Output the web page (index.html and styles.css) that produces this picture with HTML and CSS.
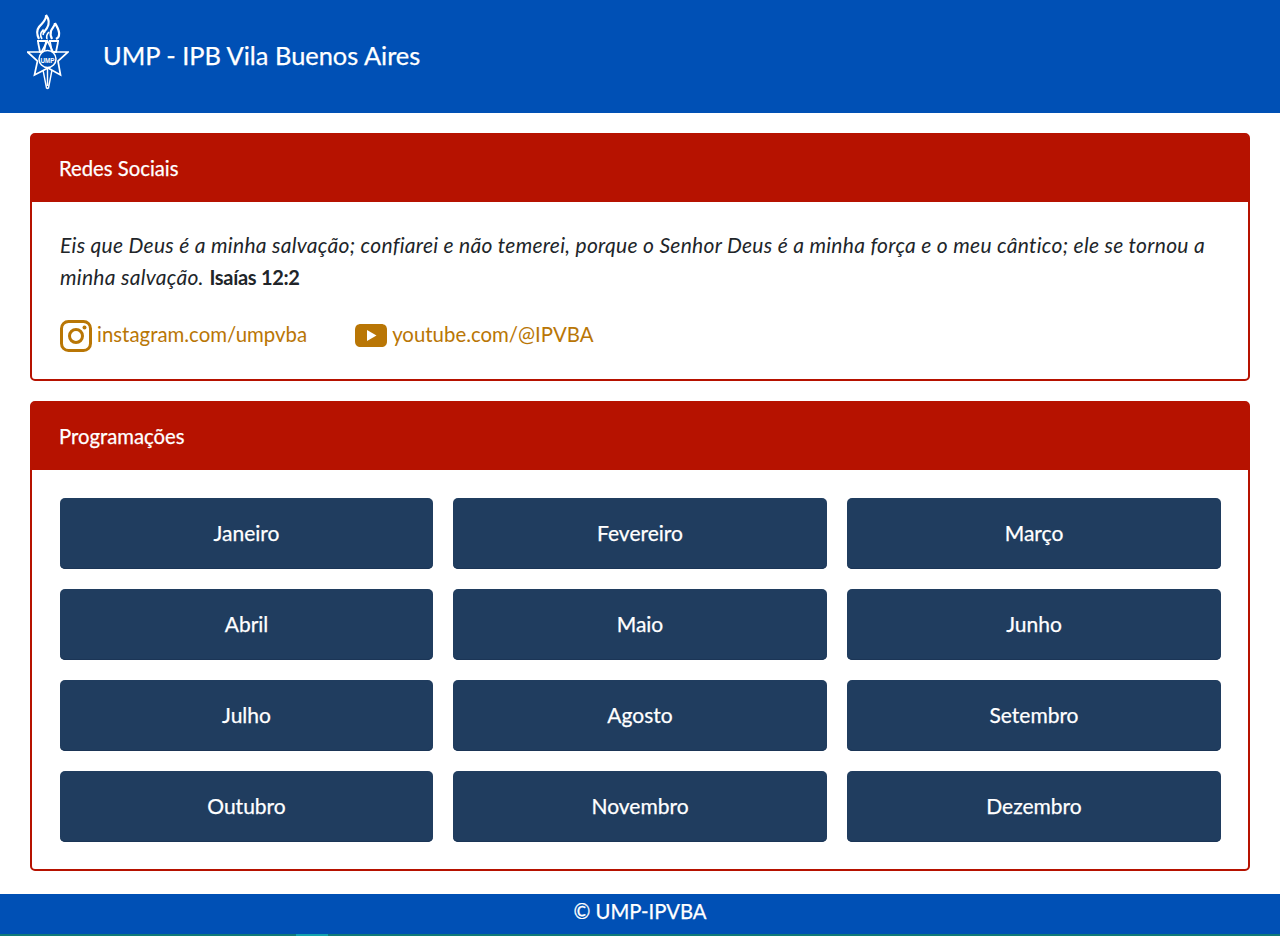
FILE: index.html
```html
<!DOCTYPE html>
<html lang="pt-BR">
<head>
    <meta charset="UTF-8">
    <meta name="viewport" content="width=device-width, initial-scale=1.0">
    <title>UMP - IPB Vila Buenos Aires</title>
    <link rel="stylesheet" href="styles.css">
</head>
<body>

    <!-- Top bar -->
    <header class="topbar">
        <svg class="logo" viewBox="0 0 42 78" fill="none" stroke="#fff" stroke-width="1.2">
            <!-- flames -->
            <path d="M19 2c1 5-4 8-7 12-3 4-2 8 0 12M19 2c3 4 4 8 1 13-1 2-3 3-3 5" stroke-width="2.2"/>
            <path d="M15 26c-2-3-2-6 1-9 1 2 1 3 0 5M20 26c-1-3 0-5 2-7" stroke-width="1.6"/>
            <path d="M28 10c0 3-3 5-4 8-1 3 0 6 1 8M28 10c2 4 5 8 4 12 0 2-1 3-3 4" stroke-width="2.2"/>
            <!-- torch cups -->
            <path d="M10 28h10M22 28h10M11 29l2 10h4l2-10M23 29l2 10h4l2-10" stroke-width="1.8"/>
            <!-- star -->
            <path d="M20.500 28l5.500 11h15l-10 9 2.500 14-12.500-7-13.500 7 3-14-10-9h14z" stroke-width="1.700"/>
            <circle cx="20.500" cy="46" r="8.500" fill="#0050b5" stroke-width="1.500"/>
            <text x="20.500" y="49.500" class="logo-text" textLength="14" lengthAdjust="spacingAndGlyphs">UMP</text>
            <!-- handle -->
            <path d="M16 57l3.500 18 1 .5 1-.5 3.500-18M20.500 56v17" stroke-width="1.400"/>
        </svg>
        <h1 class="site-title">UMP - IPB Vila Buenos Aires</h1>
    </header>

    <main class="content">

        <!-- Redes sociais -->
        <section class="card">
            <h2 class="card-header">Redes Sociais</h2>
            <div class="card-body">
                <p class="verse"><em>Eis que Deus é a minha salvação; confiarei e não temerei, porque o Senhor Deus é a minha força e o meu cântico; ele se tornou a minha salvação.</em> <strong>Isaías 12:2</strong></p>
                <div class="social-links">
                    <a class="social-link" href="#">
                        <svg class="social-icon" viewBox="0 0 32 32" fill="none" stroke="#b97605" stroke-width="3">
                            <rect x="1.500" y="1.500" width="29" height="29" rx="7"/>
                            <circle cx="16" cy="16" r="6.500"/>
                            <circle cx="24.500" cy="7.500" r="2" fill="#b97605" stroke="none"/>
                        </svg>
                        instagram.com/umpvba
                    </a>
                    <a class="social-link" href="#">
                        <svg class="social-icon" viewBox="0 0 32 32">
                            <path fill="#b97605" d="M6 4h20c4 0 6 2 6 6v11c0 4-2 6-6 6H6c-4 0-6-2-6-6V10c0-4 2-6 6-6z"/>
                            <path fill="#fff" d="M12 10l9.500 5.500-9.500 5.500z"/>
                        </svg>
                        youtube.com/@IPVBA
                    </a>
                </div>
            </div>
        </section>

        <!-- Programacoes -->
        <section class="card">
            <h2 class="card-header">Programações</h2>
            <div class="card-body month-grid">
                <a class="month-btn" href="#">Janeiro</a>
                <a class="month-btn" href="#">Fevereiro</a>
                <a class="month-btn" href="#">Março</a>
                <a class="month-btn" href="#">Abril</a>
                <a class="month-btn" href="#">Maio</a>
                <a class="month-btn" href="#">Junho</a>
                <a class="month-btn" href="#">Julho</a>
                <a class="month-btn" href="#">Agosto</a>
                <a class="month-btn" href="#">Setembro</a>
                <a class="month-btn" href="#">Outubro</a>
                <a class="month-btn" href="#">Novembro</a>
                <a class="month-btn" href="#">Dezembro</a>
            </div>
        </section>

    </main>

    <footer class="footer">© UMP-IPVBA</footer>
    <div class="footer-strip"><span class="strip-mark"></span></div>

</body>
</html>
```

FILE: styles.css
```css
* { box-sizing: border-box; }

body {
    margin: 0;
    font-family: Lato, "Open Sans", sans-serif;
    background: #fff;
    color: #212529;
}

.topbar {
    height: 113px;
    background: #0050b5;
    display: flex;
    align-items: center;
    padding-left: 27px;
    gap: 34px;
}
.logo { width: 42px; height: 78px; margin-bottom: 9px; }
.logo-text { font-size: 8px; font-weight: 700; fill: #fff; stroke: none; text-anchor: middle; font-family: "Liberation Sans", sans-serif; }
.site-title { margin: 0 0 4px; font-size: 25.4px; font-weight: 400; color: #fff; -webkit-text-stroke: .25px #fff; }

.content {
    padding: 20px 30px 23px;
    display: flex;
    flex-direction: column;
    gap: 20px;
}

.card {
    border: 2px solid #b61200;
    border-radius: 5px;
}
.card-header {
    margin: -1px -1px 0;
    height: 68px;
    padding: 0 28px;
    display: flex;
    align-items: center;
    background: #b61200;
    border-radius: 5px 5px 0 0;
    color: #fff;
    font-size: 20.3px;
    font-weight: 400;
    -webkit-text-stroke: .25px #fff;
}
.card-body { padding: 27px 27px 27px 28px; }

.verse { margin: 0; font-size: 21px; line-height: 32px; letter-spacing: .29px; }
.verse strong { font-size: 20px; line-height: 1; letter-spacing: -.3px; }
.social-links {
    display: flex;
    gap: 48px;
    margin-top: 27px;
}
.social-link {
    display: flex;
    align-items: flex-start;
    gap: 5px;
    color: #b97605;
    font-size: 20.4px;
    line-height: 28px;
    text-decoration: none;
}
.social-icon { width: 32px; height: 32px; }

.month-grid {
    display: grid;
    grid-template-columns: 373px 1fr 1fr;
    gap: 20px;
    padding-top: 28px;
}
.month-btn {
    height: 71px;
    padding-bottom: 2px;
    display: flex;
    align-items: center;
    justify-content: center;
    background: #203d5f;
    border-radius: 5px;
    box-shadow: inset 0 -1px 0 #1b3556;
    color: #fff;
    font-size: 21px;
    text-decoration: none;
    -webkit-text-stroke: .25px #fff;
}

.footer {
    height: 40px;
    background: #0050b5;
    color: #fff;
    font-size: 20.3px;
    text-align: center;
    line-height: 34px;
    -webkit-text-stroke: .25px #fff;
}
.footer-strip {
    height: 2px;
    background: #0f7a7a;
}
.strip-mark {
    display: block;
    width: 32px;
    height: 2px;
    margin-left: 296px;
    background: #12a3ad;
}
```
